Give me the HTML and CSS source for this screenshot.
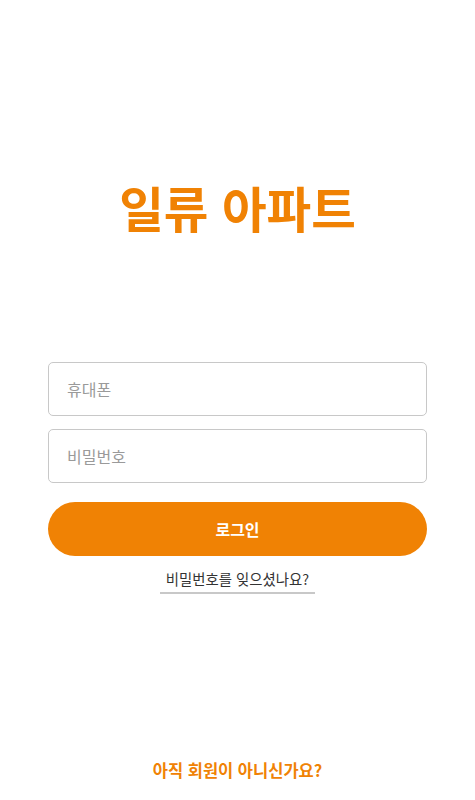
FILE: index.html
```html
<!DOCTYPE html>
<html lang="ko">
<head>
    <meta charset="UTF-8">
    <meta name="viewport" content="width=device-width, initial-scale=1.0">
    <title>일류 아파트</title>
    <link rel="stylesheet" href="styles.css">
</head>
<body>
    <div class="page">
        <h1 class="brand">일류 아파트</h1>

        <form class="login-form" onsubmit="return false">
            <input type="tel" class="field" placeholder="휴대폰" />
            <input type="password" class="field" placeholder="비밀번호" />
            <button type="submit" class="login-button">로그인</button>
            <a href="#" class="forgot-link">비밀번호를 잊으셨나요?</a>
        </form>

        <a href="#" class="signup-link">아직 회원이 아니신가요?</a>
    </div>
</body>
</html>
```

FILE: styles.css
```css
body {
    margin: 0;
    font-family: "Noto Sans CJK KR", "Noto Sans", sans-serif;
    background: #fff;
}
.page {
    display: flex;
    flex-direction: column;
    align-items: center;
    height: 800px;
    box-sizing: border-box;
    padding: 0 48px;
}
.brand {
    margin: 171px 0 0;
    font-size: 48.5px;
    line-height: 72px;
    font-weight: 700;
    color: #f08204;
}
.login-form {
    display: flex;
    flex-direction: column;
    align-items: center;
    width: 100%;
    margin-top: 119px;
}
.field {
    width: 100%;
    height: 54px;
    box-sizing: border-box;
    margin: 0 0 13px;
    padding: 0 18px;
    border: 1px solid #c8c8c8;
    border-radius: 5px;
    font-family: inherit;
    font-size: 16px;
    color: #333;
    outline: none;
}
.field::placeholder {
    color: #9a9a9a;
}
.login-button {
    width: 100%;
    height: 54px;
    margin-top: 6px;
    border: none;
    border-radius: 27px;
    background-color: #f08204;
    color: #fff;
    font-family: inherit;
    font-size: 16px;
    font-weight: 700;
    cursor: pointer;
}
.forgot-link {
    margin-top: 12px;
    padding: 0 6px 2px;
    border-bottom: 2px solid #c8c8c8;
    font-size: 14.4px;
    line-height: 22px;
    color: #333;
    text-decoration: none;
}
.signup-link {
    margin-top: auto;
    margin-bottom: 18px;
    font-size: 16.5px;
    font-weight: 700;
    color: #f08204;
    text-decoration: none;
}
```
